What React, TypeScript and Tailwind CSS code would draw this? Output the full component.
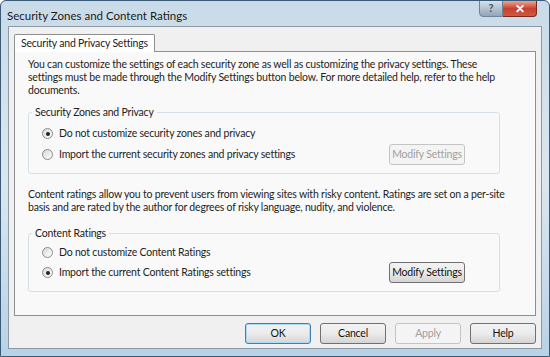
import React from "react";

const FONT = { fontFamily: '"Lato", "Liberation Sans", sans-serif' };

function Radio({ checked }: { checked?: boolean }) {
  return (
    <span className="w-[11px] h-[11px] rounded-full border border-[#8a8a8a] bg-gradient-to-br from-[#d8d8d8] to-white flex items-center justify-center shrink-0">
      {checked && <span className="w-[4px] h-[4px] rounded-full bg-[#222]" />}
    </span>
  );
}

function Btn({ label, disabled, def, w = "w-[66px]" }: { label: string; disabled?: boolean; def?: boolean; w?: string }) {
  return (
    <div
      className={`${w} h-[21px] rounded-[3px] border flex items-center justify-center whitespace-nowrap ${
        disabled
          ? "border-[#c4c4c4] text-[#a0a0a0] bg-[#f4f4f4]"
          : def
          ? "border-[#3c7fb1] text-[#111] bg-gradient-to-b from-[#f2f2f2] via-[#ebebeb] to-[#d6d6d6] shadow-[inset_0_0_0_1px_#a9dbf6]"
          : "border-[#707070] text-[#111] bg-gradient-to-b from-[#f2f2f2] via-[#ebebeb] to-[#d4d4d4]"
      }`}
    >
      {label}
    </div>
  );
}

function Group({ title, children }: { title: string; children: React.ReactNode }) {
  return (
    <fieldset className="ml-[13px] mr-[35px] border border-[#d5dfe5] rounded-[3px] pl-[11px] pr-[34px] pb-[8px] pt-[2px]">
      <legend className="px-[3px] -ml-[8px] text-[#222]">{title}</legend>
      {children}
    </fieldset>
  );
}

export default function App() {
  return (
    <div
      className="w-[550px] h-[357px] overflow-hidden bg-gradient-to-b from-[#c9dbe8] via-[#dbe7ef] to-[#b8d2e6] border border-[#3a5a78] rounded-t-[6px] flex flex-col"
      style={FONT}
    >
      {/* title bar */}
      <div className="h-[25px] flex justify-between items-start pl-[6px] pr-[12px] shrink-0">
        <div className="pt-[6px] text-[11.5px] text-[#1a1a1a]">Security Zones and Content Ratings</div>
        <div className="flex h-[17px] -mt-px">
          <div className="w-[24px] h-full border border-[#6f8496] rounded-bl-[4px] bg-gradient-to-b from-[#d6e1ea] to-[#8fa5b8] flex items-center justify-center text-[11px] font-bold text-[#40505e]">
            ?
          </div>
          <div className="w-[34px] h-full border border-[#7a2a20] border-l-0 rounded-br-[4px] bg-gradient-to-b from-[#e7a595] via-[#c9412c] to-[#cc5a3e] flex items-center justify-center text-[12px] font-bold text-white">
            ✕
          </div>
        </div>
      </div>

      {/* client area */}
      <div className="flex-1 mx-[7px] mb-[7px] border border-[#8c9aa6] bg-[#f0f0f0] flex flex-col px-[5px] pt-[6px] text-[10.5px] tracking-[-0.2px]">
        {/* tab strip */}
        <div className="flex">
          <div className="h-[18px] px-[6px] border border-b-0 border-[#8e8f8f] bg-white rounded-t-[2px] flex items-center text-[#222] relative top-px z-10">
            Security and Privacy Settings
          </div>
        </div>
        <div className="h-[265px] border border-[#8e8f8f] bg-[#f9f9f9] flex flex-col pt-[6px] text-[#1e1e1e] leading-[13px]">
          <p className="pl-[13px] w-[493px]">
            You can customize the settings of each security zone as well as customizing the privacy settings. These settings must be made through the Modify Settings button below. For more detailed help, refer to the help documents.
          </p>
          <div className="mt-[9px]">
            <Group title="Security Zones and Privacy">
              <div className="flex items-center gap-[6px] ml-[2px] mt-[6px]">
                <Radio checked />
                <span>Do not customize security zones and privacy</span>
              </div>
              <div className="flex items-center justify-between ml-[2px] mt-[4px]">
                <div className="flex items-center gap-[6px]">
                  <Radio />
                  <span>Import the current security zones and privacy settings</span>
                </div>
                <Btn label="Modify Settings" disabled w="w-[76px]" />
              </div>
            </Group>
          </div>
          <p className="pl-[13px] w-[505px] mt-[14px]">
            Content ratings allow you to prevent users from viewing sites with risky content. Ratings are set on a per-site basis and are rated by the author for degrees of risky language, nudity, and violence.
          </p>
          <div className="mt-[13px]">
            <Group title="Content Ratings">
              <div className="flex items-center gap-[6px] ml-[2px] mt-[4px]">
                <Radio />
                <span>Do not customize Content Ratings</span>
              </div>
              <div className="flex items-center justify-between ml-[2px] mt-[3px]">
                <div className="flex items-center gap-[6px]">
                  <Radio checked />
                  <span>Import the current Content Ratings settings</span>
                </div>
                <Btn label="Modify Settings" w="w-[76px]" />
              </div>
            </Group>
          </div>
        </div>
        <div className="flex justify-end gap-[9px] mt-[7px]">
          <Btn label="OK" def />
          <Btn label="Cancel" />
          <Btn label="Apply" disabled />
          <Btn label="Help" />
        </div>
      </div>
    </div>
  );
}
